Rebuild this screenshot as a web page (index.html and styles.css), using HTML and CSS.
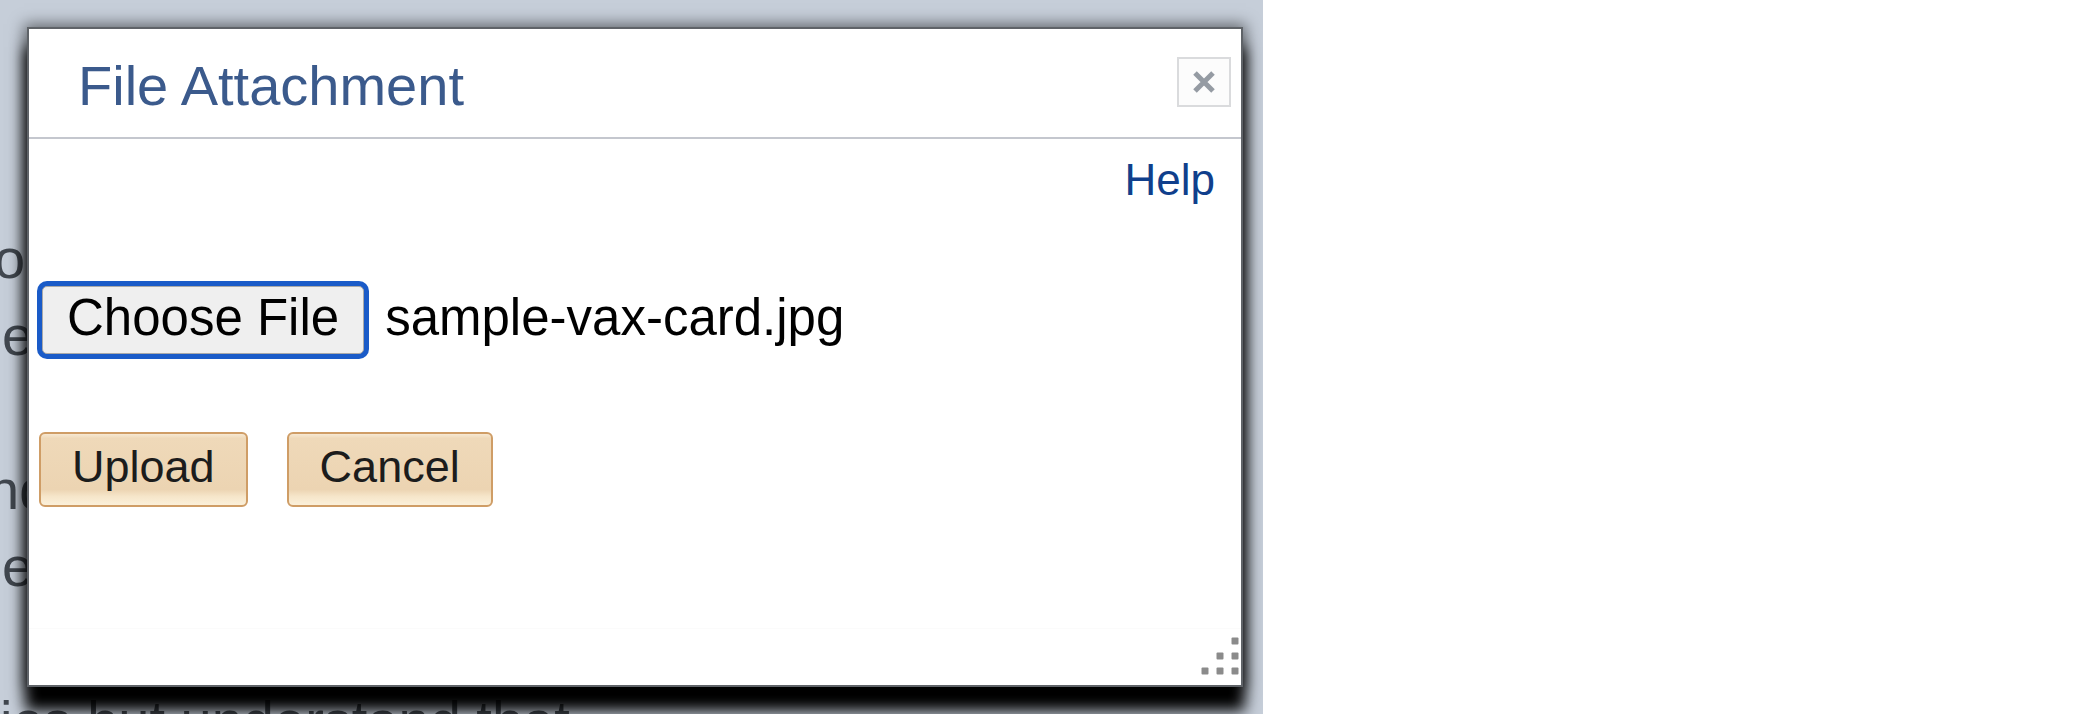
FILE: index.html
```html
<!DOCTYPE html>
<html lang="en">
<head>
<meta charset="utf-8">
<title>File Attachment</title>
<link rel="stylesheet" href="styles.css">
</head>
<body>
<div class="backdrop">
  <div class="pagetext">
    <div class="ln ln-o">ou can submit your proof of vaccination here</div>
    <div class="ln ln-e">e sure the image is clear and readable</div>
    <div class="ln ln-blank">&nbsp;</div>
    <div class="ln ln-n">nd the card shows your name and dates</div>
    <div class="ln ln-e">e will review your submission shortly</div>
    <div class="ln ln-blank">&nbsp;</div>
    <div class="ln ln-i">ies but understand that</div>
  </div>

  <div class="dialog" role="dialog" aria-label="File Attachment">
    <div class="dlg-head">
      <h1 class="dlg-title">File Attachment</h1>
      <button class="dlg-close" aria-label="Close">
        <svg width="26" height="22" viewBox="0 0 26 22"><path d="M4 2 L22 20 M22 2 L4 20" stroke="#959ba3" stroke-width="5" fill="none"/></svg>
      </button>
    </div>
    <div class="dlg-body">
      <div class="help-row"><a class="help" href="#">Help</a></div>
      <div class="file-row">
        <button class="choose">Choose File</button>
        <span class="fname">sample-vax-card.jpg</span>
      </div>
      <div class="btn-row">
        <button class="btn">Upload</button>
        <button class="btn">Cancel</button>
      </div>
    </div>
    <div class="dlg-foot"></div>
    <svg class="grip" width="38" height="38" viewBox="0 0 38 38">
      <rect x="30.5" y="0.5" width="7" height="7" rx="1" fill="#8b8b8b"/>
      <rect x="15.5" y="15.5" width="7" height="7" rx="1" fill="#8b8b8b"/>
      <rect x="30.5" y="15.5" width="7" height="7" rx="1" fill="#8b8b8b"/>
      <rect x="0.5" y="30.5" width="7" height="7" rx="1" fill="#8b8b8b"/>
      <rect x="15.5" y="30.5" width="7" height="7" rx="1" fill="#8b8b8b"/>
      <rect x="30.5" y="30.5" width="7" height="7" rx="1" fill="#8b8b8b"/>
    </svg>
  </div>
</div>
</body>
</html>
```
FILE: styles.css
```css
html, body {
  margin: 0;
  padding: 0;
  background: #ffffff;
}

body {
  font-family: "Liberation Sans", Arial, sans-serif;
  width: 2100px;
  height: 714px;
  overflow: hidden;
}

.backdrop {
  position: relative;
  width: 1263px;
  height: 714px;
  overflow: hidden;
  background: #c6ced9;
}

/* underlying page text (mostly covered by the modal) */
.pagetext {
  padding-top: 220px;
  font-size: 56px;
  line-height: 77px;
  color: #41474f;
  white-space: nowrap;
}

.ln-o { margin-left: -6px; }
.ln-e { margin-left: 2px; }
.ln-n { margin-left: -12px; }
.ln-i { margin-left: 0; }

/* modal dialog */
.dialog {
  position: absolute;
  left: 27px;
  top: 27px;
  width: 1216px;
  height: 660px;
  box-sizing: border-box;
  border: 2px solid #5f6368;
  background: #ffffff;
  display: flex;
  flex-direction: column;
  box-shadow: 0 0 14px 3px rgba(0, 0, 0, 0.5), 0 22px 14px 2px rgba(0, 0, 0, 1);
}

.dlg-head {
  display: flex;
  align-items: flex-start;
  height: 108px;
  padding: 0 10px 0 49px;
  border-bottom: 2px solid #c4c7ce;
}

.dlg-title {
  margin: 25px 0 0 0;
  font-size: 56px;
  line-height: 64px;
  font-weight: normal;
  color: #3b5a8c;
}

.dlg-close {
  margin: 28px 0 0 auto;
  width: 54px;
  height: 50px;
  box-sizing: border-box;
  padding: 0;
  border: 2px solid #dadbdd;
  background: #fcfcfc;
  display: flex;
  align-items: center;
  justify-content: center;
}

.dlg-body {
  padding: 16px 26px 0 10px;
}

.help-row {
  text-align: right;
  font-size: 44px;
  line-height: 50px;
}

.help {
  color: #103f8c;
  text-decoration: none;
}

.file-row {
  display: flex;
  align-items: baseline;
  margin-top: 81px;
  padding-left: 3px;
}

.choose {
  font-family: "Liberation Sans", Arial, sans-serif;
  font-size: 51px;
  line-height: 61px;
  padding: 0 24px 5px;
  color: #000000;
  background: #efefef;
  border: 1px solid #a9a9a9;
  border-radius: 5px;
  box-shadow: 0 0 0 5px #1a5bc8;
}

.fname {
  margin-left: 21px;
  font-size: 51px;
  line-height: 61px;
  color: #000000;
}

.btn-row {
  display: flex;
  gap: 39px;
  margin-top: 78px;
}

.btn {
  font-family: "Liberation Sans", Arial, sans-serif;
  font-size: 45px;
  line-height: 66px;
  padding: 0 31px 5px;
  color: #1c1c1c;
  border: 2px solid #cf9d66;
  border-radius: 6px;
  background: linear-gradient(to bottom, #f7e8d2 0%, #efd9b9 6%, #ecd4b2 78%, #f6e6ca 88%, #fbf0da 100%);
}

.dlg-foot {
  margin-top: auto;
  height: 56px;
  border-top: 1px solid #fbfbfb;
}

.grip {
  position: absolute;
  right: 2px;
  bottom: 10px;
}
```
